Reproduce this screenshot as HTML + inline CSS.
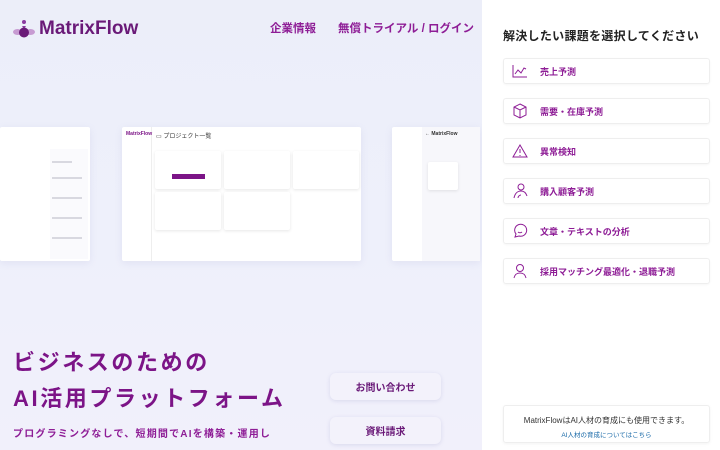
<!DOCTYPE html>
<html><head><meta charset="utf-8"><style>
*{margin:0;padding:0;box-sizing:border-box}
body{width:720px;height:450px;overflow:hidden;font-family:"Liberation Sans","Noto Sans CJK JP",sans-serif;background:linear-gradient(180deg,#eceef9 0%,#eef0fb 50%,#f1f0fb 100%);position:relative}
.logo{position:absolute;left:13px;top:18px;display:flex;align-items:center;color:#6a1a78;font-weight:bold;font-size:19px}
.nav{position:absolute;top:20px;font-size:11.5px;font-weight:bold;color:#8e1d96}
.right{position:absolute;left:482px;top:0;width:238px;height:450px;background:#fff}
.title{position:absolute;left:0;width:238px;top:27px;text-align:center;font-size:12px;color:#222;font-weight:bold;letter-spacing:.3px}
.item{position:absolute;left:21px;width:207px;height:26px;border:1px solid #eee;border-radius:3px;box-shadow:0 1px 2px rgba(0,0,0,.04);display:flex;align-items:center;font-size:9px;font-weight:bold;color:#8e1d96}
.item svg{margin:0 12px 0 8px}
.card{position:absolute;background:#fff;border-radius:2px;box-shadow:0 2px 8px rgba(120,120,180,.12)}
.h1{position:absolute;left:13px;font-size:22px;font-weight:bold;color:#7c1487;letter-spacing:2.6px;line-height:30px}
.btn{position:absolute;left:330px;width:111px;height:27px;border-radius:6px;background:#f3f2fb;box-shadow:0 1px 4px rgba(120,120,180,.2);font-size:10px;font-weight:bold;color:#6a1a78;display:flex;align-items:center;justify-content:center}
.bar{position:absolute;height:2px;background:#d8d8e0}
.mini{position:absolute;background:#fff;border-radius:2px;box-shadow:0 1px 3px rgba(0,0,0,.1)}
</style></head><body>
<div class="logo"><svg width="22" height="20" viewBox="0 0 22 20"><circle cx="11" cy="3" r="2" fill="#8a3aa0"/><path d="M9 7h4l-2 3z" fill="#8a3aa0"/><ellipse cx="4.5" cy="13" rx="4.5" ry="3" fill="#c79bd2"/><ellipse cx="17.5" cy="13" rx="4.5" ry="3" fill="#c79bd2"/><circle cx="11" cy="13.5" r="5" fill="#6a1a78"/></svg><span style="margin-left:4px">MatrixFlow</span></div>
<div class="nav" style="left:270px">企業情報</div>
<div class="nav" style="left:338px">無償トライアル / ログイン</div>

<div class="card" style="left:0;top:127px;width:90px;height:134px">
<div style="position:absolute;left:50px;top:22px;width:38px;height:110px;background:#fafafd"></div>
<div class="bar" style="left:52px;top:34px;width:20px"></div><div class="bar" style="left:52px;top:50px;width:30px"></div><div class="bar" style="left:52px;top:70px;width:30px"></div><div class="bar" style="left:52px;top:90px;width:30px"></div><div class="bar" style="left:52px;top:110px;width:30px"></div></div>
<div class="card" style="left:122px;top:127px;width:239px;height:134px">
<div style="position:absolute;left:0;top:0;width:30px;height:134px;border-right:1px solid #eee"></div>
<div style="position:absolute;left:4px;top:4px;font-size:5px;color:#7c1487;font-weight:bold">MatrixFlow</div>
<div style="position:absolute;left:34px;top:4px;font-size:6px;color:#333">▭ プロジェクト一覧</div>
<div class="mini" style="left:33px;top:24px;width:66px;height:38px"><div style="position:absolute;left:17px;top:23px;width:33px;height:5px;background:#7c1487"></div></div>
<div class="mini" style="left:102px;top:24px;width:66px;height:38px"></div>
<div class="mini" style="left:171px;top:24px;width:66px;height:38px"></div>
<div class="mini" style="left:33px;top:65px;width:66px;height:38px"></div>
<div class="mini" style="left:102px;top:65px;width:66px;height:38px"></div></div>
<div class="card" style="left:392px;top:127px;width:88px;height:134px">
<div style="position:absolute;left:30px;top:0;width:58px;height:134px;background:#f7f7fb"></div>
<div style="position:absolute;left:33px;top:4px;font-size:5px;color:#333;font-weight:bold">← MatrixFlow</div>
<div class="mini" style="left:36px;top:35px;width:30px;height:28px"></div></div>

<div class="h1" style="top:348px">ビジネスのための</div>
<div class="h1" style="top:384px">AI活用プラットフォーム</div>
<div style="position:absolute;left:13px;top:425px;font-size:10px;font-weight:bold;color:#8e1d96;letter-spacing:1.2px">プログラミングなしで、短期間でAIを構築・運用し</div>
<div class="btn" style="top:373px">お問い合わせ</div>
<div class="btn" style="top:417px">資料請求</div>

<div class="right">
<div class="title">解決したい課題を選択してください</div>
<div class="item" style="top:58px"><svg width="16" height="14" fill="none" stroke="#8e1d96" stroke-width="1"><path d="M1 1v12h14M3 10l3-4 3 3 3-5 2 1"/></svg>売上予測</div>
<div class="item" style="top:98px"><svg width="16" height="16" fill="none" stroke="#8e1d96" stroke-width="1"><path d="M8 1l6 3v8l-6 3-6-3V4zM2 4l6 3 6-3M8 7v8"/></svg>需要・在庫予測</div>
<div class="item" style="top:138px"><svg width="16" height="14" fill="none" stroke="#8e1d96" stroke-width="1"><path d="M8 1l7 12H1zM8 5v4M8 11v1"/></svg>異常検知</div>
<div class="item" style="top:178px"><svg width="16" height="16" fill="none" stroke="#8e1d96" stroke-width="1"><circle cx="9" cy="4" r="3"/><path d="M2 15c1-5 4-7 7-7s5 2 6 5M6 15c0-2 2-3 3-3"/></svg>購入顧客予測</div>
<div class="item" style="top:218px"><svg width="16" height="16" fill="none" stroke="#8e1d96" stroke-width="1"><path d="M3 14l1-3a6 6 0 1 1 3 2z"/><path d="M6 9c1 1 3 1 4 0"/></svg>文章・テキストの分析</div>
<div class="item" style="top:258px"><svg width="16" height="16" fill="none" stroke="#8e1d96" stroke-width="1"><circle cx="8" cy="5" r="3.5"/><path d="M2 15c1-4 3-5 6-5s5 1 6 5"/></svg>採用マッチング最適化・退職予測</div>
<div style="position:absolute;left:21px;top:405px;width:207px;height:38px;border:1px solid #eee;border-radius:3px;box-shadow:0 1px 3px rgba(0,0,0,.05);text-align:center">
<div style="font-size:8px;color:#333;margin-top:9px">MatrixFlowはAI人材の育成にも使用できます。</div>
<div style="font-size:6.5px;color:#1a6aa8;margin-top:3px">AI人材の育成についてはこちら</div></div>
</div>
</body></html>
